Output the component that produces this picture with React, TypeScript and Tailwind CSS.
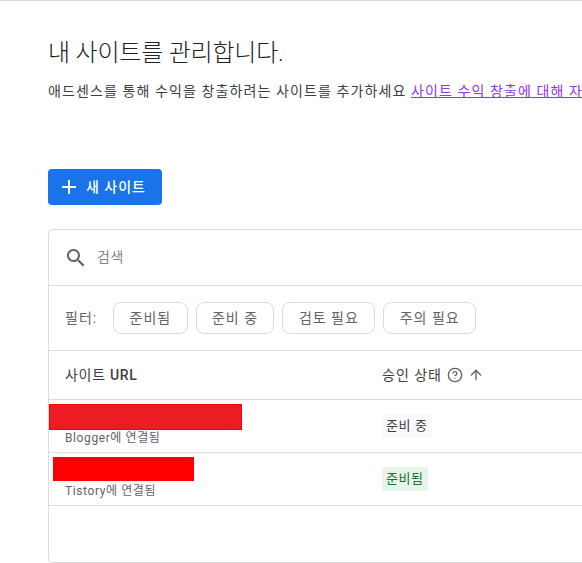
import { CircleHelp, ArrowUp } from "lucide-react";

const FONT = "font-['Roboto','Noto_Sans_CJK_KR',sans-serif]";
const FILTERS = ["준비됨", "준비 중", "검토 필요", "주의 필요"];

export default function App() {
  return (
    <div className={`h-[563px] w-[582px] overflow-hidden border-t border-[#dadce0] bg-white text-[#202124] ${FONT}`}>
      <div className="w-[760px] pl-12 pt-[36px]">
        <h1 className="text-[24px] leading-[32px] font-light tracking-[-0.2px]">내 사이트를 관리합니다.</h1>
        <p className="mt-[12px] whitespace-nowrap text-[14px] leading-[20px] tracking-[1.1px] text-[#3c4043]">
          애드센스를 통해 수익을 창출하려는 사이트를 추가하세요{" "}
          <a href="#" className="text-[#9334e6] underline">사이트 수익 창출에 대해 자세히 알아보기</a>
        </p>

        <button className="mt-[68px] flex h-[36px] w-[114px] items-center rounded-[4px] bg-[#1a73e8] pl-[9px] text-[14px] font-medium tracking-[1px] text-white">
          <svg width="24" height="24" viewBox="0 0 24 24" fill="currentColor">
            <path d="M19 13h-6v6h-2v-6H5v-2h6V5h2v6h6v2z" />
          </svg>
          <span className="ml-[5px]">새 사이트</span>
        </button>

        <div className="mt-[24px] h-[334px] rounded-[4px] border border-[#dadce0]">
          <div className="flex h-[56px] items-center border-b border-[#dadce0] pl-[15px]">
            <svg width="24" height="24" viewBox="0 0 24 24" fill="#5f6368">
              <path d="M15.5 14h-.79l-.28-.27C15.41 12.59 16 11.11 16 9.5 16 5.91 13.09 3 9.5 3S3 5.91 3 9.5 5.91 16 9.5 16c1.61 0 3.09-.59 4.23-1.57l.27.28v.79l5 4.99L20.49 19l-4.99-5zm-6 0C7.01 14 5 11.99 5 9.5S7.01 5 9.5 5 14 7.01 14 9.5 11.99 14 9.5 14z" />
            </svg>
            <span className="ml-[9px] text-[14px] tracking-[0.5px] text-[#80868b]">검색</span>
          </div>

          <div className="flex h-[65px] items-center border-b border-[#dadce0] pl-[16px]">
            <span className="mr-[16px] text-[14px] tracking-[1px] text-[#5f6368]">필터:</span>
            <div className="flex gap-[8px]">
              {FILTERS.map((f) => (
                <span
                  key={f}
                  className="flex h-[32px] items-center rounded-[8px] border border-[#dadce0] px-[15.4px] text-[14px] tracking-[1px] text-[#5f6368]"
                >
                  {f}
                </span>
              ))}
            </div>
          </div>

          <div className="flex h-[49px] items-center border-b border-[#dadce0] text-[14px]">
            <div className="w-[333px] pl-[16px] tracking-[0.7px] text-[#3c4043]">
              사이트 <span className="font-medium">URL</span>
            </div>
            <div className="flex items-center tracking-[1px] text-[#3c4043]">
              승인 상태
              <CircleHelp size={16} strokeWidth={2} className="ml-[5px] text-[#5f6368]" />
              <ArrowUp size={16} strokeWidth={2} className="ml-[5px] text-[#5f6368]" />
            </div>
          </div>

          <Row sub="Blogger에 연결됨" badge="준비 중" badgeClass="bg-[#f8f9fa] text-[#3c4043]" />
          <Row sub="Tistory에 연결됨" badge="준비됨" badgeClass="bg-[#e6f4ea] text-[#137333]" />
        </div>
      </div>

      {/* redacted site names */}
      <div className="absolute left-[49px] top-[404px] h-[26px] w-[193px] border border-[#ff0000] bg-[#ed1c24]" />
      <div className="absolute left-[53px] top-[457px] h-[24px] w-[141px] bg-[#ff0000]" />
    </div>
  );
}

function Row({ sub, badge, badgeClass }: { sub: string; badge: string; badgeClass: string }) {
  return (
    <div className="flex h-[53px] items-center border-b border-[#dadce0]">
      <div className="w-[333px] self-end pb-[6px] pl-[16px] text-[12px] leading-[16px] tracking-[0.6px] text-[#5f6368]">{sub}</div>
      <span className={`rounded-[2px] px-[4px] py-[2px] text-[13px] leading-[20px] tracking-[0.6px] ${badgeClass}`}>{badge}</span>
    </div>
  );
}
